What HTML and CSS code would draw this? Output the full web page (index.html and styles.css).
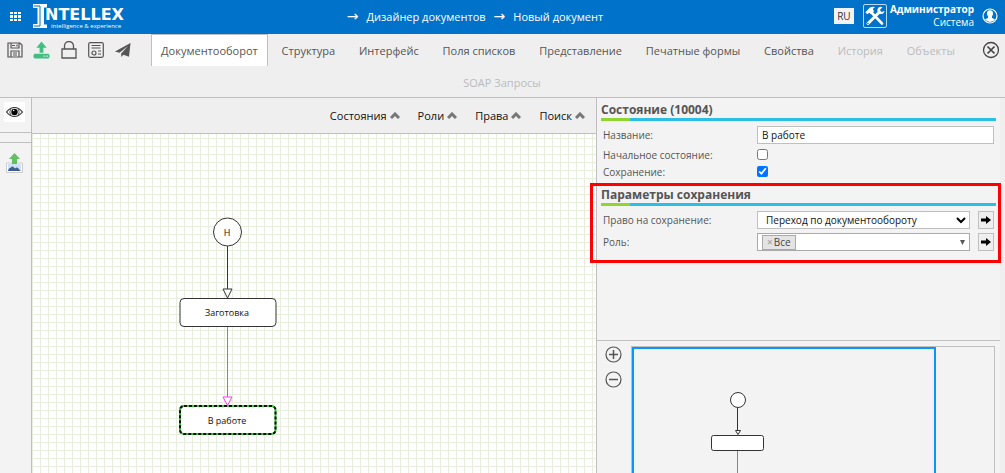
FILE: index.html
```html
<!DOCTYPE html>
<html lang="ru">
<head>
<meta charset="utf-8">
<title>Дизайнер документов</title>
<link rel="stylesheet" href="styles.css">
</head>
<body>
<div class="app">
  <header class="topbar">
    <button class="icon-btn apps" aria-label="Приложения">
      <svg width="11" height="9" viewBox="0 0 11 9" fill="#fff"><path d="M0 0h3v2H0zM4 0h3v2H4zM8 0h3v2H8zM0 3h3v3H0zM4 3h3v3H4zM8 3h3v3H8zM0 7h3v2H0zM4 7h3v2H4zM8 7h3v2H8z"/></svg>
    </button>
    <a class="logo" href="#" aria-label="Intellex">
      <svg width="93" height="26" viewBox="0 0 93 26">
        <path fill="#fff" d="M0 1h14v3.500h-3v17h3V25H0v-4h4.500V5H0z"/>
        <path fill="none" stroke="#0072c9" stroke-width="1" d="M1 3h6v20H1"/>
        <text class="logo-name" x="12" y="17">NTELLEX</text>
        <text class="logo-sub" x="18" y="25">intelligence &amp; experience</text>
      </svg>
    </a>
    <nav class="crumbs">
      <span class="arrow">→</span><a href="#">Дизайнер документов</a>
      <span class="arrow">→</span><a href="#">Новый документ</a>
    </nav>
    <button class="lang">RU</button>
    <button class="icon-btn tools" aria-label="Настройки">
      <svg width="24" height="24" viewBox="0 0 24 24">
        <rect x=".5" y=".5" width="23" height="23" rx="1.500" fill="none" stroke="#b9daf3"/>
        <path d="M8 8 19 19.500" stroke="#fff" stroke-width="2.600" stroke-linecap="round"/>
        <path d="M2.300 8.200 7 3.500Q9 2.200 12 3L9.800 5l1.200 2.200L8 10.200 6.300 8.800 4.300 10.300z" fill="#fff"/>
        <path d="M5 19.500 16.500 8" stroke="#fff" stroke-width="3" stroke-linecap="round"/>
        <path d="M19.500 3.200a3.600 3.600 0 1 0 2 3.800L18.500 8 16.800 6z" fill="#fff"/>
        <circle cx="5" cy="19.500" r=".8" fill="#0072c9"/>
      </svg>
    </button>
    <div class="user"><strong>Администратор</strong><span>Система</span></div>
    <button class="icon-btn" aria-label="Профиль">
      <svg width="16" height="16" viewBox="0 0 16 16"><circle cx="8" cy="8" r="7" fill="none" stroke="#fff" stroke-width="1.200"/><path fill="#fff" d="M8 2.300c2.200 0 3.200 1.600 3 3.500-.1 1.300-.7 2.200-1.200 2.900l.2 1.200 3 1.300A6 6 0 0 1 8 14a6 6 0 0 1-5-2.800l3-1.300.2-1.200C5.700 8 5.100 7.100 5 5.800c-.2-1.900.8-3.500 3-3.500z"/></svg>
    </button>
  </header>

  <div class="tabbar">
    <div class="actions">
      <button class="icon-btn" aria-label="Сохранить">
        <svg width="16" height="16" viewBox="0 0 16 16" fill="none" stroke="#555" stroke-width="1.200"><path d="M1 1h12l2 2v12H1zM4 1v5h8V1M4 15V9h8v6M6 11h4M6 13h4"/><path d="M5 3.500h3M10 2.500v2"/></svg>
      </button>
      <button class="icon-btn" aria-label="Загрузить">
        <svg width="17" height="18" viewBox="0 0 18 18"><path fill="#41bf83" d="M9 0l5.500 6.500H11V12H7V6.500H3.500zM1.500 13h15l1 1.500v2l-1 1.500h-15l-1-1.500v-2z"/><path stroke="#eee" d="M11 15.500h2M14 15.500h2"/></svg>
      </button>
      <button class="icon-btn" aria-label="Заблокировать">
        <svg width="16" height="18" viewBox="0 0 16 18" fill="none" stroke="#555" stroke-width="1.300"><path d="M1 8h14v9H1zM3.500 8V5a4.500 4.500 0 0 1 9 0v3"/></svg>
      </button>
      <button class="icon-btn" aria-label="Карточка">
        <svg width="16" height="16" viewBox="0 0 16 16" fill="none" stroke="#555" stroke-width="1.200"><rect x=".7" y=".7" width="14.600" height="14.600" rx="1.500"/><path d="M3.500 3.500h9M3.500 6h9M10 9h3M10 12h3"/><circle cx="6" cy="11" r="2"/></svg>
      </button>
      <button class="icon-btn" aria-label="Отправить">
        <svg width="16" height="15" viewBox="0 0 16 15"><path fill="#555" d="M15.500 0 0 8.500l4.500 1.300L13 3 6.200 10.500V14l2.300-2.300 5.500 2z"/></svg>
      </button>
    </div>
    <button class="icon-btn close" aria-label="Закрыть">
      <svg width="18" height="18" viewBox="0 0 18 18" fill="none" stroke="#444" stroke-width="1.300"><circle cx="9" cy="9" r="7.500"/><path stroke-width="1.700" d="m5.500 5.500 7 7m0-7-7 7"/></svg>
    </button>
    <nav class="tabs">
      <a class="tab active" href="#">Документооборот</a>
      <a class="tab" href="#">Структура</a>
      <a class="tab" href="#">Интерфейс</a>
      <a class="tab" href="#">Поля списков</a>
      <a class="tab" href="#">Представление</a>
      <a class="tab" href="#">Печатные формы</a>
      <a class="tab" href="#">Свойства</a>
      <a class="tab disabled" href="#">История</a>
      <a class="tab disabled" href="#">Объекты</a>
      <a class="tab disabled" href="#">SOAP Запросы</a>
    </nav>
  </div>

  <main class="workspace">
    <aside class="rail">
      <button class="icon-btn view" aria-label="Просмотр">
        <svg width="21" height="20" viewBox="0 0 21 20"><path fill="#fff" d="M0 0h21v20H0z"/><path fill="none" stroke="#333" stroke-width="1.200" d="M2.500 10Q6 5.500 10.500 5.500T18.500 10Q15 14.500 10.500 14.500T2.500 10z"/><path fill="none" stroke="#333" stroke-width=".8" d="M7 6.500q-2.500 3.500 0 7M14 6.500q2.500 3.500 0 7"/><circle cx="10.500" cy="10" r="3.200"/><circle cx="9.700" cy="8.500" r=".8" fill="#fff"/></svg>
      </button>
      <div class="rail-gap"></div>
      <button class="icon-btn export" aria-label="Экспорт изображения">
        <svg width="17" height="20" viewBox="0 0 17 20"><path fill="#fff" stroke="#ccc" d="M.5 10h16v9.500H.5z"/><path fill="#cfe2f5" d="M2 11h13v7H2z"/><path fill="#3f5f8f" d="M2 17.500q1-3 3-3 1-2 3 0l1 1q2-2 3.500 0l2 2.500H2z"/><path fill="#62bf62" d="m8.500 0 5.500 6h-3v5H6V6H3z"/></svg>
      </button>
    </aside>

    <section class="editor">
      <div class="filters">
        <button class="filter">Состояния <svg width="10" height="7" viewBox="0 0 10 7"><path d="M1 6 5 2l4 4"/></svg></button>
        <button class="filter">Роли <svg width="10" height="7" viewBox="0 0 10 7"><path d="M1 6 5 2l4 4"/></svg></button>
        <button class="filter">Права <svg width="10" height="7" viewBox="0 0 10 7"><path d="M1 6 5 2l4 4"/></svg></button>
        <button class="filter">Поиск <svg width="10" height="7" viewBox="0 0 10 7"><path d="M1 6 5 2l4 4"/></svg></button>
      </div>
      <div class="canvas">
        <svg width="100%" height="100%">
          <g fill="#fff" stroke="#333">
            <circle cx="195.500" cy="98" r="14"/>
            <path d="M195.500 112v43M191 155h9l-4.500 9z"/>
            <rect x="148" y="164.500" width="96" height="28" rx="4"/>
          </g>
          <path fill="#fff" stroke="#f3f" d="M195.500 193v70M191 263h9l-4.500 8.500z"/>
          <rect x="148" y="272" width="95.500" height="28" rx="4" fill="#fff" stroke="#3c3" stroke-width="2"/>
          <rect x="148" y="272" width="95.500" height="28" rx="4" fill="none" stroke="#111" stroke-width="2" stroke-dasharray="3 2"/>
          <g class="node-text"><text x="195" y="102">Н</text><text x="195" y="182">Заготовка</text><text x="195" y="290">В работе</text></g>
        </svg>
      </div>
    </section>

    <aside class="side">
      <form class="props">
        <h2>Состояние (10004)</h2>
        <div class="row first"><label for="name">Название:</label><input id="name" class="field" type="text" value="В работе"></div>
        <div class="row check"><label for="initial">Начальное состояние:</label><input id="initial" type="checkbox"></div>
        <div class="row check"><label for="keep">Сохранение:</label><input id="keep" type="checkbox" checked></div>
        <div class="saving">
          <h2>Параметры сохранения</h2>
          <div class="row first"><label for="right">Право на сохранение:</label>
            <div class="pick"><select id="right" class="field"><option>Переход по документообороту</option></select>
              <svg class="caret" width="10" height="7" viewBox="0 0 10 7"><path fill="none" stroke="#000" stroke-width="2" d="m1 1 4 4 4-4"/></svg></div>
            <button class="go" type="button" aria-label="Открыть право"><svg width="10" height="8" viewBox="0 0 10 8"><path d="M0 2.500h5V0l5 4-5 4V5.500H0z"/></svg></button>
          </div>
          <div class="row"><span class="label" id="role">Роль:</span>
            <div class="field multi" role="listbox" aria-labelledby="role"><span class="chip"><button type="button" aria-label="Удалить">×</button>Все</span>
              <svg width="5" height="5" viewBox="0 0 5 5"><path fill="#555" d="M0 0h5L2.500 5z"/></svg></div>
            <button class="go" type="button" aria-label="Открыть роль"><svg width="10" height="8" viewBox="0 0 10 8"><path d="M0 2.500h5V0l5 4-5 4V5.500H0z"/></svg></button>
          </div>
          <div class="highlight"></div>
        </div>
      </form>
      <div class="overview">
        <div class="zoom">
          <button class="icon-btn" aria-label="Увеличить"><svg width="17" height="17" viewBox="0 0 17 17" fill="none" stroke="#555" stroke-width="1.200"><circle cx="8.500" cy="8.500" r="7.500"/><path stroke-width="1.500" d="M4 8.500h9M8.500 4v9"/></svg></button>
          <button class="icon-btn" aria-label="Уменьшить"><svg width="17" height="17" viewBox="0 0 17 17" fill="none" stroke="#555" stroke-width="1.200"><circle cx="8.500" cy="8.500" r="7.500"/><path stroke-width="1.500" d="M4 8.500h9"/></svg></button>
        </div>
        <div class="minimap">
          <div class="viewport">
            <svg width="100%" height="100%">
              <g fill="#fff" stroke="#333"><circle cx="104" cy="51" r="7.500"/><path d="M103.500 59v22M101.500 81.500h5l-2.500 4z"/><rect x="77.500" y="86.500" width="52" height="15" rx="2"/></g>
              <path stroke="#f3f" d="M103.500 102v60"/>
            </svg>
          </div>
        </div>
      </div>
    </aside>
  </main>
</div>
</body>
</html>
```
FILE: styles.css
```css
* { box-sizing: border-box; }
body { margin: 0; font-family: "Open Sans", sans-serif; font-size: 12px; color: #444; }
a { color: inherit; text-decoration: none; }
button, input, select { font: inherit; color: inherit; }
svg { display: block; }
.icon-btn { border: 0; padding: 0; background: none; display: flex; align-items: center; justify-content: center; }

.app { height: 100vh; display: flex; flex-direction: column; background: #efefef; overflow: hidden; }

.topbar { height: 34px; flex: none; display: flex; align-items: center; padding: 0 7px 2px 10px; background: #0072c9; color: #fff; }
.logo { margin-left: 12px; }
.logo-name { font: bold 16px "DejaVu Sans", sans-serif; fill: #fff; }
.logo-sub { font: 6px "Open Sans", sans-serif; fill: #fff; }
.crumbs { flex: 1; display: flex; justify-content: center; align-items: center; gap: 8px; padding-right: 10px; font-size: 11px; font-weight: 500; }
.arrow { font-family: "DejaVu Sans", sans-serif; font-size: 14px; }
.lang { width: 20px; height: 16px; margin-right: 9px; padding: 0; border: 0; background: #f3f3f3; color: #333; font-size: 10px; line-height: 16px; }
.user { display: flex; flex-direction: column; align-items: flex-end; margin: 0 8px 0 3px; font-size: 10px; line-height: 13px; }

.tabbar { height: 64px; flex: none; border-bottom: 1px solid #bfbfbf; }
.actions { float: left; display: flex; align-items: center; gap: 10px; height: 32px; margin: 0 4px 0 6px; }
.actions .icon-btn { width: 17px; }
.close { float: right; height: 32px; margin-right: 5px; }
.tabs { text-align: center; font-size: 11px; line-height: 32px; }
.tab { display: inline-block; vertical-align: top; height: 32px; margin-right: 1px; padding: 0 9px; border: 1px solid transparent; border-bottom: 0; color: #555; }
.tab.active { background: #fff; border-color: #bfbfbf; }
.tab.disabled { color: #bbb; }

.workspace { flex: 1; min-height: 0; display: flex; }
.rail { width: 32px; flex: none; border-right: 1px solid #bfbfbf; background: #f3f3f3; }
.view { margin: 4px 0 10px 4px; }
.rail-gap { height: 11px; border: solid #bfbfbf; border-width: 1px 0; }
.export { margin: 10px 0 0 6px; }

.editor { flex: 1; min-width: 0; display: flex; flex-direction: column; }
.filters { height: 36px; flex: none; display: flex; justify-content: flex-end; align-items: center; gap: 18px; padding-right: 11px; border-bottom: 1px solid #bfbfbf; }
.filter { display: flex; align-items: center; gap: 3px; padding: 0; border: 0; background: none; font-size: 11px; font-weight: 500; color: #111; }
.filter path { fill: none; stroke: #777; stroke-width: 3px; }
.canvas { flex: 1; min-height: 0; overflow: hidden; background: linear-gradient(#e7eedd 1px, transparent 1px) 0 4px / 8px 8px, linear-gradient(90deg, #e7eedd 1px, transparent 1px) 0 0 / 8px 8px, #fff; }
.node-text { font-size: 9px; text-anchor: middle; fill: #111; }

.side { width: 404px; flex: none; display: flex; flex-direction: column; margin-right: 5px; border-left: 1px solid #bfbfbf; background: #f3f3f3; }
.props { flex: 1; padding: 3px 4px 0; }
h2 { margin: 0; height: 20px; font-size: 12px; line-height: 17px; font-weight: 700; color: #555; border-bottom: 3px solid; border-image: linear-gradient(90deg, #8fd42f 30px, #2bbfe8 30px) 1; }
.row { display: flex; align-items: center; height: 22px; padding: 0 2px; font-size: 10px; color: #555; }
.row.first { margin-top: 3px; }
.row label, .label { width: 154px; flex: none; }
.row.check { height: 17px; }
.row input[type="checkbox"] { width: 11px; height: 11px; margin: 0; }
.field { flex: 1; min-width: 0; height: 18px; padding: 0 4px; border: 1px solid #bfbfbf; border-radius: 0; background: #fff; color: #111; }
.saving { position: relative; margin-top: 6px; }
.highlight { position: absolute; top: -3px; left: -11px; right: -5px; height: 80px; border: 3px solid #f00; pointer-events: none; }
.pick { flex: 1; display: flex; position: relative; }
.pick .field { appearance: none; padding-left: 8px; }
.caret { position: absolute; right: 4px; top: 6px; }
.multi { display: flex; align-items: center; justify-content: space-between; border-color: #aaa; }
.chip { display: flex; gap: 1px; height: 15px; padding: 0 4px; border: 1px solid #aaa; background: #e4e4e4; line-height: 13px; color: #444; }
.chip button { padding: 0; border: 0; background: none; color: #999; }
.go { width: 16px; height: 18px; flex: none; margin-left: 8px; padding: 0; border: 1px solid #bfbfbf; background: #efefef; display: flex; align-items: center; justify-content: center; }

.overview { height: 133px; flex: none; display: flex; gap: 9px; padding: 5px 5px 0 8px; border-top: 1px solid #bfbfbf; }
.zoom { display: flex; flex-direction: column; gap: 8px; }
.minimap { flex: 1; border: 1px solid #bfbfbf; border-bottom: 0; }
.viewport { width: 84%; height: 100%; border: 2px solid #0a96f9; border-bottom: 0; overflow: hidden; }
```
